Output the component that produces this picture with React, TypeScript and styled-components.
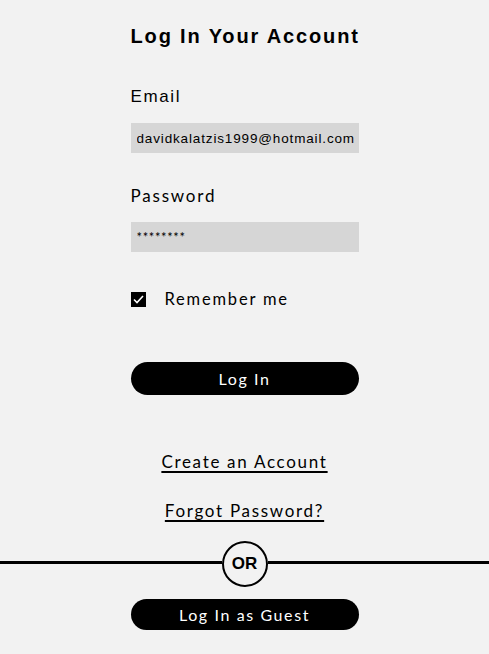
import React from 'react';
import styled, { createGlobalStyle } from 'styled-components';

const GlobalStyle = createGlobalStyle`
  html, body {
    margin: 0;
    padding: 0;
    background: #f2f2f2;
  }
`;

const geo = `"Liberation Sans", "DejaVu Sans", sans-serif`;
const human = `Lato, "Open Sans", sans-serif`;

const Page = styled.div`
  display: flex;
  flex-direction: column;
  align-items: center;
  padding-top: 24px;
  min-height: 654px;
  box-sizing: border-box;
  background: #f2f2f2;
  color: #000;
`;

const Form = styled.form`
  width: 228px;
  display: flex;
  flex-direction: column;
`;

const Title = styled.h1`
  margin: 0;
  font-family: ${geo};
  font-weight: 700;
  font-size: 20px;
  line-height: 24px;
  letter-spacing: 1.85px;
  text-align: center;
  white-space: nowrap;
`;

const Label = styled.label<{ $geo?: boolean; $top: number }>`
  display: block;
  margin-top: ${p => p.$top}px;
  font-family: ${p => (p.$geo ? geo : human)};
  font-size: 17px;
  line-height: 20px;
  letter-spacing: ${p => (p.$geo ? 1.6 : 1.8)}px;
`;

const Input = styled.input<{ $geo?: boolean }>`
  margin-top: 16px;
  height: 30px;
  width: 100%;
  box-sizing: border-box;
  border: none;
  outline: none;
  background: #d6d6d6;
  padding: 0 0 0 6px;
  font-family: ${p => (p.$geo ? geo : human)};
  font-size: ${p => (p.$geo ? 13.5 : 13)}px;
  letter-spacing: ${p => (p.$geo ? 0.85 : 0.6)}px;
  color: #000;
`;

const CheckRow = styled.label`
  margin-top: 37px;
  height: 20px;
  display: flex;
  align-items: center;
  gap: 19px;
  font-family: ${human};
  font-size: 16.5px;
  letter-spacing: 1.8px;
`;

const Box = styled.span`
  width: 15px;
  height: 15px;
  background: #000;
  display: flex;
  align-items: center;
  justify-content: center;
`;

const PillButton = styled.button<{ $top: number; $h: number }>`
  margin-top: ${p => p.$top}px;
  height: ${p => p.$h}px;
  width: 228px;
  border: none;
  border-radius: 17px;
  background: #000;
  color: #fff;
  font-family: ${human};
  font-size: 16px;
  letter-spacing: 1.6px;
  cursor: pointer;
`;

const Links = styled.div`
  display: flex;
  flex-direction: column;
  align-items: center;
`;

const TextLink = styled.a<{ $top: number }>`
  margin-top: ${p => p.$top}px;
  font-family: ${human};
  font-size: 17px;
  line-height: 20px;
  letter-spacing: 1.7px;
  color: #000;
  text-decoration: underline;
  text-decoration-thickness: 1.5px;
  text-underline-offset: 3px;
`;

const Divider = styled.div`
  margin-top: 20px;
  width: 100%;
  display: flex;
  align-items: center;
`;

const Line = styled.div`
  flex: 1;
  height: 3px;
  background: #000;
  margin-top: -3px;
`;

const Circle = styled.div`
  width: 46px;
  height: 46px;
  box-sizing: border-box;
  border: 2.5px solid #000;
  border-radius: 50%;
  display: flex;
  align-items: center;
  justify-content: center;
  font-family: ${geo};
  font-weight: 700;
  font-size: 17px;
`;

export default function App() {
  return (
    <>
      <GlobalStyle />
      <Page>
        <Form onSubmit={e => e.preventDefault()}>
          <Title>Log In Your Account</Title>
          <Label $geo $top={39}>Email</Label>
          <Input $geo defaultValue="davidkalatzis1999@hotmail.com" />
          <Label $top={33}>Password</Label>
          <Input defaultValue="********" />
          <CheckRow>
            <Box>
              <svg width="11" height="9" viewBox="0 0 11 9">
                <path d="M1 4.5 L4 7.5 L10 1" stroke="#fff" strokeWidth="1.6" fill="none" />
              </svg>
            </Box>
            Remember me
          </CheckRow>
          <PillButton type="submit" $top={53} $h={33}>Log In</PillButton>
        </Form>
        <Links>
          <TextLink href="#" $top={57}>Create an Account</TextLink>
          <TextLink href="#" $top={29}>Forgot Password?</TextLink>
        </Links>
        <Divider>
          <Line />
          <Circle>OR</Circle>
          <Line />
        </Divider>
        <PillButton type="button" $top={12} $h={31}>Log In as Guest</PillButton>
      </Page>
    </>
  );
}
